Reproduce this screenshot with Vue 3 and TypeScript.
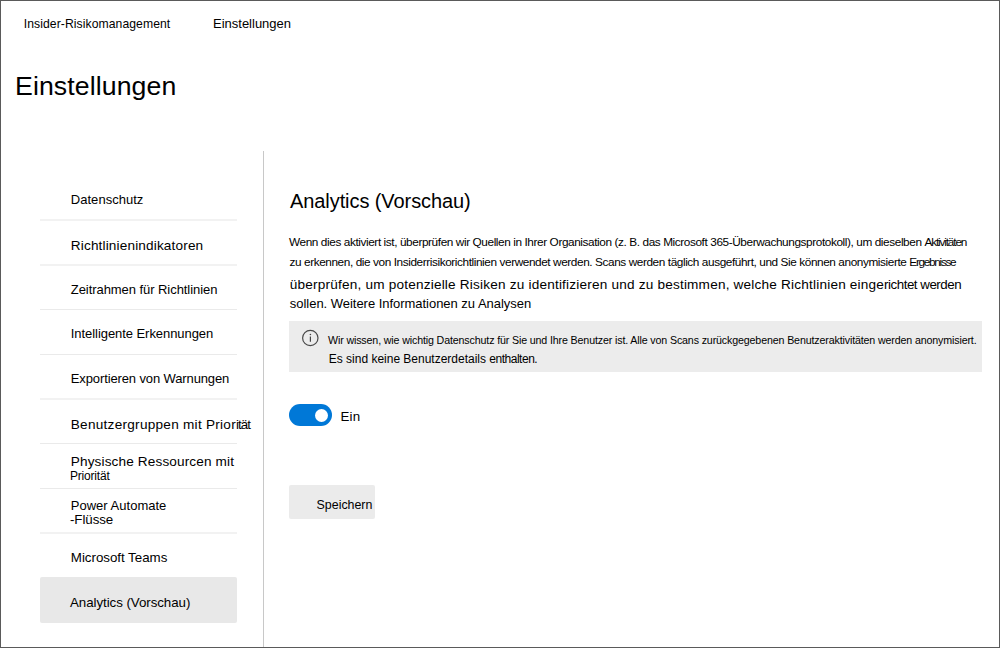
<script setup lang="ts">
import { ref } from 'vue'

interface Run { text: string; size: number; tracking: number }
interface NavItem { lines: Run[][]; height: number; top: number; line: 'thin' | 'soft' | 'none' }

const run = (text: string, size: number, tracking: number): Run => ({ text, size, tracking })
const runStyle = (r: Run) => ({ fontSize: `${r.size}px`, letterSpacing: `${r.tracking}px` })

const nav: NavItem[] = [
  { lines: [[run('Datenschutz', 13, 0.03)]], height: 45, top: 16, line: 'soft' },
  { lines: [[run('Richtlinienindikatoren', 13.6, 0.15)]], height: 45, top: 17, line: 'soft' },
  { lines: [[run('Zeitrahmen für Richtlinien', 13, -0.06)]], height: 44, top: 16, line: 'thin' },
  { lines: [[run('Intelligente Erkennungen', 13, -0.06)]], height: 45, top: 16, line: 'thin' },
  { lines: [[run('Exportieren von Warnungen', 13, -0.12)]], height: 45, top: 16, line: 'soft' },
  { lines: [[run('Benutzergruppen mit Prior', 13.6, 0.26), run('ität', 13.33, -0.9)]], height: 44, top: 17, line: 'thin' },
  { lines: [[run('Physische Ressourcen mit', 13.6, 0.13)], [run('Priorität', 12, -0.2)]], height: 45, top: 10, line: 'thin' },
  { lines: [[run('Power Automate', 13, 0.01)], [run('-Flüsse', 13.33, -0.07)]], height: 45, top: 9, line: 'soft' },
  { lines: [[run('Microsoft Teams', 13.33, -0.02)]], height: 43, top: 16, line: 'none' },
  { lines: [[run('Analytics (Vorschau)', 13.33, -0.06)]], height: 46, top: 18, line: 'none' },
]
const current = ref(nav.length - 1)

const intro: { runs: Run[]; kind: string }[] = [
  { kind: 'small', runs: [
    run('Wenn dies aktiviert ist, überprüfen wir Quellen in Ihrer Organisation (z. B. das Microsoft 365-Überwachungsprotokoll), um dieselben ', 11.8, -0.405),
    run('Aktivitäten', 11.8, -1.15),
  ] },
  { kind: 'small', runs: [
    run('zu erkennen, die von Insiderrisikorichtlinien verwendet werden. Scans werden täglich ausgeführt, und Sie können anonymisierte ', 11.8, -0.41),
    run('Ergebnisse', 11.8, -1.3),
  ] },
  { kind: 'large first', runs: [
    run('überprüfen, um potenzielle Risiken zu identifizieren und zu bestimmen, welche Richtlinien einge', 13.6, 0.195),
    run('richtet werden', 13.33, -0.48),
  ] },
  { kind: 'large', runs: [run('sollen. Weitere Informationen zu Analysen', 13, -0.03)] },
]
const notice: Run[][] = [
  [run('Wir wissen, wie wichtig Datenschutz für Sie und Ihre Benutzer ist. Alle von Scans zurückgegebenen Benutzeraktivitäten werden anonymisiert.', 10.67, -0.138)],
  [run('Es sind keine Benutzerdetails ', 12, -0.01), run('enthalten.', 12, -0.48)],
]
const enabled = ref(true)
</script>

<template>
  <div class="page">
    <nav class="crumbs">
      <span class="crumb-parent">Insider-Risikomanagement</span>
      <span class="crumb-current">Einstellungen</span>
    </nav>
    <h1>Einstellungen</h1>
    <div class="columns">
      <ul class="side">
        <li
          v-for="(item, i) in nav"
          :key="i"
          :class="['item', item.line, { active: i === current }]"
          :style="{ height: `${item.height}px`, paddingTop: `${item.top}px` }"
          @click="current = i"
        >
          <div v-for="(line, j) in item.lines" :key="j" :class="['label', { second: j > 0, compact: line[0].size < 13 }]">
            <span v-for="(r, k) in line" :key="k" :style="runStyle(r)">{{ r.text }}</span>
          </div>
        </li>
      </ul>
      <main class="content">
        <h2>Analytics (Vorschau)</h2>
        <div class="intro">
          <div v-for="(line, i) in intro" :key="i" :class="line.kind">
            <span v-for="(r, k) in line.runs" :key="k" :style="runStyle(r)">{{ r.text }}</span>
          </div>
        </div>
        <div class="notice">
          <svg class="info" width="18" height="18" viewBox="0 0 18 18" fill="none">
            <circle cx="9.3" cy="9" r="7.7" stroke="#4a4a4a" stroke-width="1.2" />
            <path d="M9.4 7.6V12.8" stroke="#444" stroke-width="1.2" />
            <circle cx="9.4" cy="5.5" r=".8" fill="#444" />
          </svg>
          <div class="notice-text">
            <div v-for="(line, i) in notice" :key="i">
              <span v-for="(r, k) in line" :key="k" :style="runStyle(r)">{{ r.text }}</span>
            </div>
          </div>
        </div>
        <div class="switch-row">
          <button :class="['switch', { on: enabled }]" role="switch" :aria-checked="enabled" @click="enabled = !enabled">
            <span class="knob"></span>
          </button>
          <span class="state">Ein</span>
        </div>
        <button class="save">Speichern</button>
      </main>
    </div>
  </div>
</template>

<style>
body { margin: 0; background: #fff; }
</style>

<style scoped>
.page {
  box-sizing: border-box;
  width: 1000px;
  height: 648px;
  display: flex;
  flex-direction: column;
  overflow: hidden;
  border: 1px solid #5a5a5a;
  background: #fff;
  color: #000;
  font-family: "Liberation Sans", Arial, sans-serif;
  white-space: pre;
}
.crumbs {
  display: flex;
  align-items: baseline;
  height: 19px;
  padding: 13px 0 0 22.7px;
  line-height: 19px;
}
.crumb-parent { width: 189.3px; font-size: 12.2px; letter-spacing: .07px; }
.crumb-current { font-size: 13px; }
h1 {
  margin: 37px 0 0 14px;
  font-size: 26.67px;
  line-height: 32px;
  font-weight: 400;
  letter-spacing: .1px;
}
.columns { display: flex; flex: 1; margin-top: 49px; min-height: 0; }
.side {
  box-sizing: border-box;
  width: 263px;
  margin: 0;
  padding: 25px 26px 0 39px;
  border-right: 1px solid #c8c8c8;
  list-style: none;
}
.item { box-sizing: border-box; padding-left: 30.8px; cursor: pointer; }
.item.active { padding-left: 30px; }
.thin { border-bottom: 1px solid #eaeaea; }
.soft { border-bottom: 2px solid #f2f2f2; }
.active { border-radius: 2px; background: #e8e8e8; }
.label { display: flex; line-height: 15px; }
.second { margin-left: -.8px; line-height: 13px; }
.second.compact { line-height: 14px; }
.content { flex: 1; padding-left: 25px; }
h2 {
  margin: 38px 0 0 1px;
  font-size: 20px;
  line-height: 24px;
  font-weight: 400;
  letter-spacing: -.08px;
}
.intro { margin-top: 19px; }
.small { display: flex; height: 20px; line-height: 20px; }
.small + .small { padding-left: .5px; }
.large { display: flex; padding-left: .8px; height: 19px; line-height: 19px; }
.first { margin-top: 3px; }
.notice {
  box-sizing: border-box;
  display: flex;
  width: 693px;
  height: 51px;
  margin-top: 8px;
  padding: 8px 0 0 12px;
  background: #ececec;
}
.info { flex: none; }
.notice-text { padding: 2px 0 0 9px; }
.notice-text > div { display: flex; height: 19px; line-height: 18px; }
.notice-text > div + div { padding-left: .8px; }
.switch-row { display: flex; height: 22px; margin-top: 32px; }
.switch {
  display: flex;
  align-items: center;
  box-sizing: border-box;
  width: 43px;
  height: 22px;
  padding: 0 4px;
  border: 0;
  border-radius: 11px;
  background: #777;
}
.switch.on { justify-content: flex-end; background: #0078d7; }
.knob { width: 13px; height: 13px; border-radius: 50%; background: #fff; }
.state { padding: 5px 0 0 8.6px; font-size: 13.33px; line-height: 15px; letter-spacing: .1px; }
.save {
  display: block;
  box-sizing: border-box;
  width: 86px;
  height: 34px;
  margin-top: 59px;
  padding: 5px 0 0 27.6px;
  border: 0;
  border-radius: 2px;
  background: #ebebeb;
  color: #000;
  font: 12.4px/18px "Liberation Sans", Arial, sans-serif;
  text-align: left;
}
</style>
